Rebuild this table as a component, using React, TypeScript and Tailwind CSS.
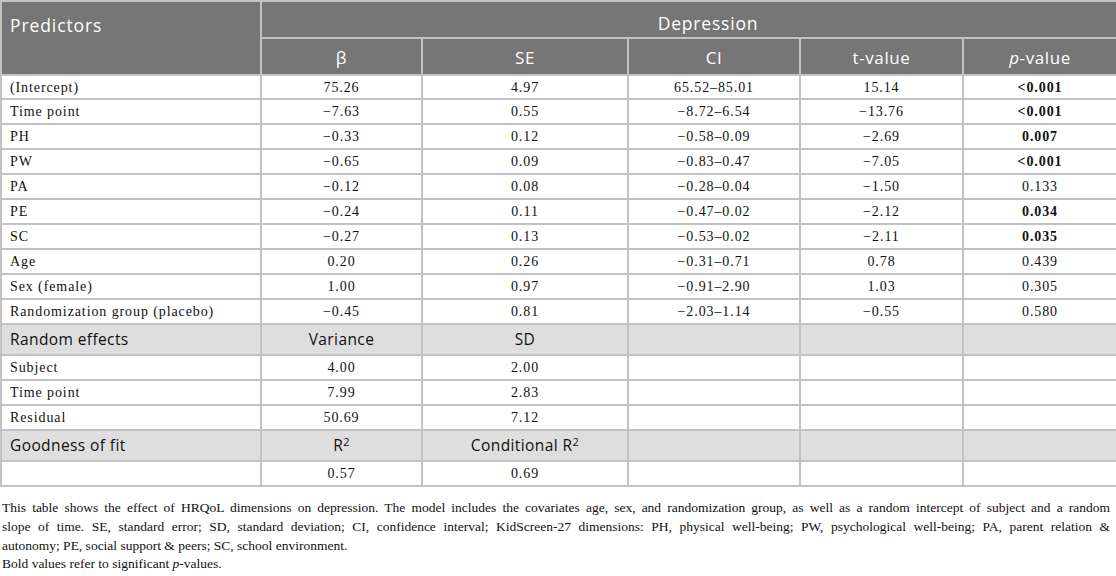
import type { ReactNode } from "react";

type Row = {
  label: string;
  beta: string;
  se: string;
  ci: string;
  t: string;
  p: string;
  bold?: boolean;
};

const rows: Row[] = [
  { label: "(Intercept)", beta: "75.26", se: "4.97", ci: "65.52–85.01", t: "15.14", p: "<0.001", bold: true },
  { label: "Time point", beta: "−7.63", se: "0.55", ci: "−8.72–6.54", t: "−13.76", p: "<0.001", bold: true },
  { label: "PH", beta: "−0.33", se: "0.12", ci: "−0.58–0.09", t: "−2.69", p: "0.007", bold: true },
  { label: "PW", beta: "−0.65", se: "0.09", ci: "−0.83–0.47", t: "−7.05", p: "<0.001", bold: true },
  { label: "PA", beta: "−0.12", se: "0.08", ci: "−0.28–0.04", t: "−1.50", p: "0.133" },
  { label: "PE", beta: "−0.24", se: "0.11", ci: "−0.47–0.02", t: "−2.12", p: "0.034", bold: true },
  { label: "SC", beta: "−0.27", se: "0.13", ci: "−0.53–0.02", t: "−2.11", p: "0.035", bold: true },
  { label: "Age", beta: "0.20", se: "0.26", ci: "−0.31–0.71", t: "0.78", p: "0.439" },
  { label: "Sex (female)", beta: "1.00", se: "0.97", ci: "−0.91–2.90", t: "1.03", p: "0.305" },
  { label: "Randomization group (placebo)", beta: "−0.45", se: "0.81", ci: "−2.03–1.14", t: "−0.55", p: "0.580" },
];

const randomEffects = [
  { label: "Subject", variance: "4.00", sd: "2.00" },
  { label: "Time point", variance: "7.99", sd: "2.83" },
  { label: "Residual", variance: "50.69", sd: "7.12" },
];

const cell = "border-2 border-[#c2c2c2] px-[8px] py-0";
const serif = "font-['Liberation_Serif',serif] text-[14px] tracking-[0.9px] text-[#111]";
const sans = "font-['Open_Sans',sans-serif]";

const Head = ({ children }: { children: ReactNode }) => (
  <th className={`${cell} border-[#a9a9a9] pb-[4px] align-bottom text-center text-[17px] font-normal tracking-[0.6px] text-white`}>
    {children}
  </th>
);

const SectionRow = ({ cells }: { cells: ReactNode[] }) => (
  <tr className={`h-[31px] bg-[#dedede] ${sans} text-[15.5px] tracking-[0.4px] text-[#111]`}>
    {cells.map((c, i) => (
      <td key={i} className={`${cell} ${i === 0 ? "text-left" : "text-center"} pt-[1px]`}>
        {c}
      </td>
    ))}
  </tr>
);

export default function App() {
  return (
    <div className="w-[1116px] bg-white">
      <table className="w-[1116px] table-fixed border-collapse">
        <colgroup>
          <col className="w-[260px]" />
          <col className="w-[161px]" />
          <col className="w-[206px]" />
          <col className="w-[172px]" />
          <col className="w-[163px]" />
          <col className="w-[154px]" />
        </colgroup>
        <thead className={`bg-[#767676] ${sans}`}>
          <tr className="h-[37px]">
            <th
              rowSpan={2}
              className={`${cell} border-[#a9a9a9] pt-[10px] align-top text-left text-[17.5px] font-normal tracking-[0.9px] text-white`}
            >
              Predictors
            </th>
            <th
              colSpan={5}
              className={`${cell} border-[#a9a9a9] pb-[1px] pl-[46px] align-bottom text-center text-[17.5px] font-normal tracking-[0.8px] text-white`}
            >
              Depression
            </th>
          </tr>
          <tr className="h-[37px]">
            <Head>β</Head>
            <Head>SE</Head>
            <Head>CI</Head>
            <Head>t-value</Head>
            <Head>
              <i>p</i>-value
            </Head>
          </tr>
        </thead>
        <tbody>
          {rows.map((r, i) => (
            <tr key={r.label} className={`${i === 0 ? "h-[24px]" : "h-[25px]"} ${serif}`}>
              <td className={`${cell} text-left`}>{r.label}</td>
              <td className={`${cell} text-center`}>{r.beta}</td>
              <td className={`${cell} text-center`}>{r.se}</td>
              <td className={`${cell} text-center`}>{r.ci}</td>
              <td className={`${cell} text-center`}>{r.t}</td>
              <td className={`${cell} text-center ${r.bold ? "font-bold" : ""}`}>{r.p}</td>
            </tr>
          ))}
          <SectionRow cells={["Random effects", "Variance", "SD", "", "", ""]} />
          {randomEffects.map((r) => (
            <tr key={r.label} className={`h-[25px] ${serif}`}>
              <td className={`${cell} text-left`}>{r.label}</td>
              <td className={`${cell} text-center`}>{r.variance}</td>
              <td className={`${cell} text-center`}>{r.sd}</td>
              <td className={cell}></td>
              <td className={cell}></td>
              <td className={cell}></td>
            </tr>
          ))}
          <SectionRow
            cells={[
              "Goodness of fit",
              <>
                R<sup className="text-[11px]">2</sup>
              </>,
              <>
                Conditional R<sup className="text-[11px]">2</sup>
              </>,
              "",
              "",
              "",
            ]}
          />
          <tr className={`h-[25px] ${serif}`}>
            <td className={cell}></td>
            <td className={`${cell} text-center`}>0.57</td>
            <td className={`${cell} text-center`}>0.69</td>
            <td className={cell}></td>
            <td className={cell}></td>
            <td className={cell}></td>
          </tr>
        </tbody>
      </table>
      <div className="mt-[12px] pl-[2px] pr-[6px] font-['Liberation_Serif',serif] text-[13.5px] leading-[18.8px] text-[#111]">
        <div className="text-justify [text-align-last:justify]">
          This table shows the effect of HRQoL dimensions on depression. The model includes the covariates age, sex, and
          randomization group, as well as a random intercept of subject and a random
        </div>
        <div className="text-justify [text-align-last:justify]">
          slope of time. SE, standard error; SD, standard deviation; CI, confidence interval; KidScreen-27 dimensions: PH,
          physical well-being; PW, psychological well-being; PA, parent relation &amp;
        </div>
        <div>autonomy; PE, social support &amp; peers; SC, school environment.</div>
        <div>
          Bold values refer to significant <i>p</i>-values.
        </div>
      </div>
    </div>
  );
}
